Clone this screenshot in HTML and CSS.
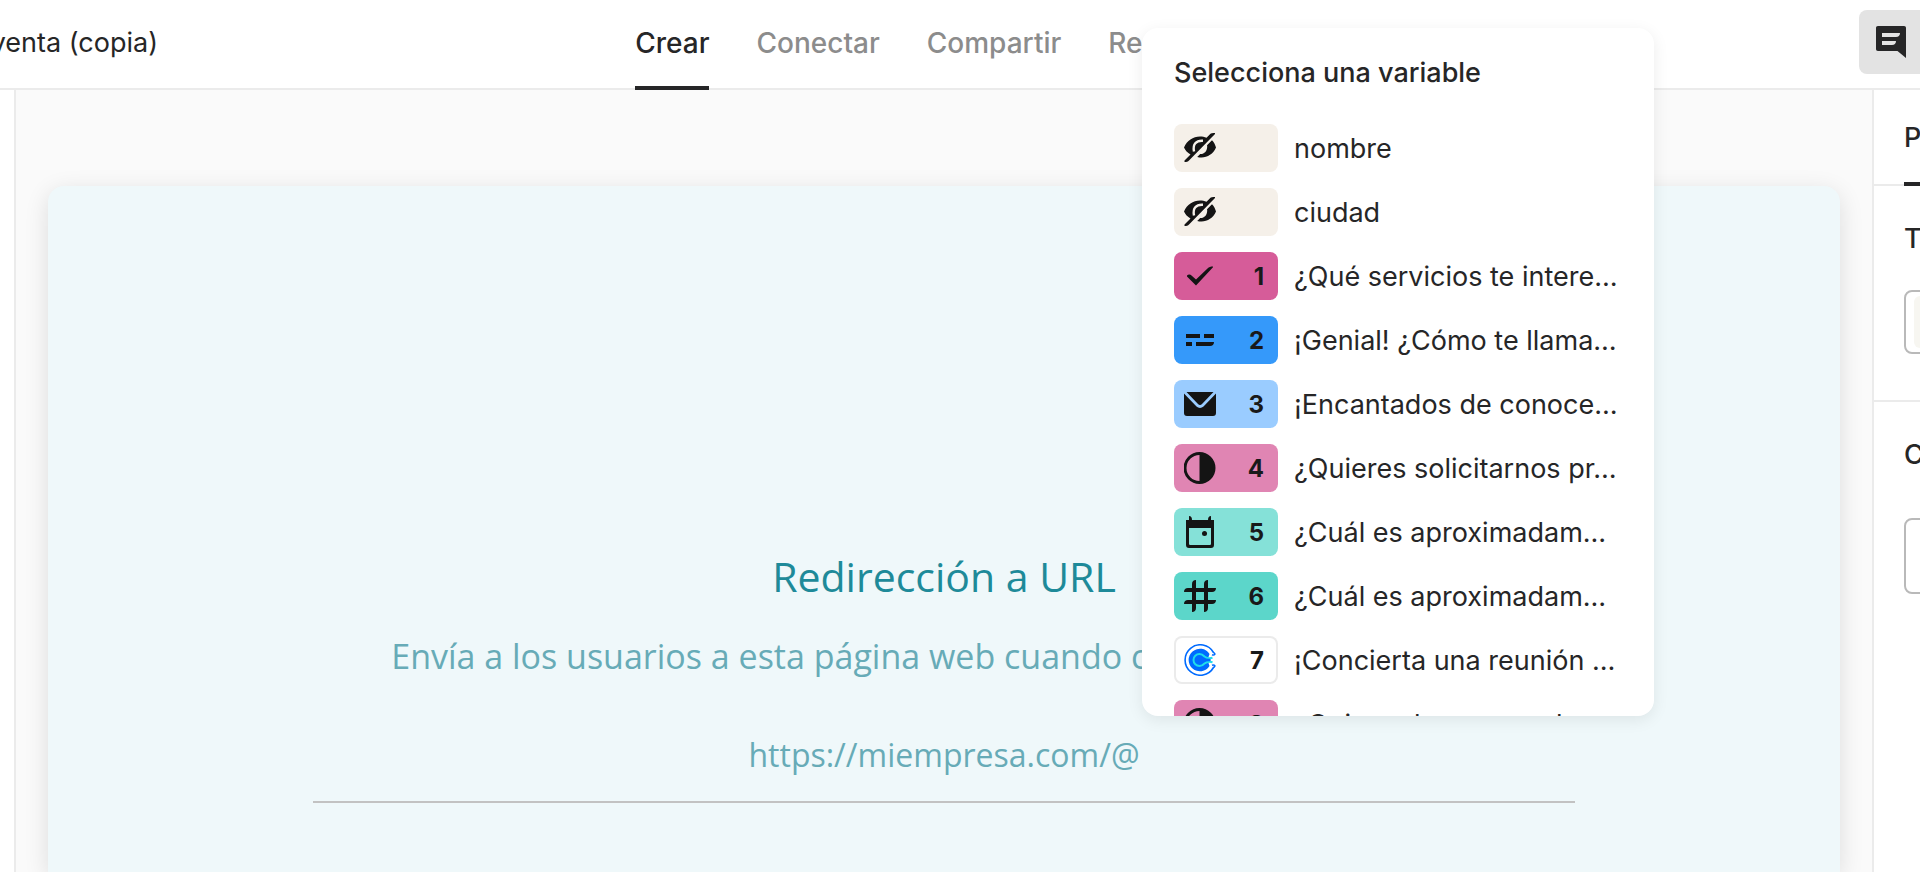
FILE: index.html
```html
<!DOCTYPE html>
<html lang="es">
<head>
<meta charset="utf-8">
<meta name="viewport" content="width=device-width, initial-scale=1">
<title>Editor de formularios</title>
<link rel="stylesheet" href="styles.css">
</head>
<body>
<svg class="sprite" aria-hidden="true">
  <symbol id="hidden" viewBox="0 0 32 32">
    <path d="M0 15.500C3 8.500 9 4.500 16 4.500c2.300 0 4.500.5 6.500 1.300L26 2.200C27 1.200 28.500 1 31 1v1L5 28.500c-1 1-2.500 1.500-4.500 1.500v-1.500l6-6C3.500 20.800 1.200 18.500 0 15.500Z"/>
    <path d="M10 19.500C8.500 12.500 12 8.300 19 8.800" fill="none" stroke="var(--badge)" stroke-width="2.400"/>
    <path d="M28 8.200c2 2 3.200 4.300 4 7.300C29.500 21.800 23.500 25.500 17.500 25.500c-1.500 0-3-.2-4.300-.6l3-2.800c3.600 0 7-2.500 7-7.600l-.2-1.300Z"/>
  </symbol>
  <symbol id="check" viewBox="0 0 32 32">
    <path d="M3 15.500c1.500-1.500 3.500-1 4.500 0l4.500 4L23.500 8.500c1.500-1.500 3-2 5.500-2v.8L12 25.500 3 16.500Z"/>
  </symbol>
  <symbol id="short" viewBox="0 0 32 32">
    <path d="M2 10h14v4H2zM20 10h10v4H20zM2 18h6v4H2zM12 18h18c0 2.500-1.500 4-4 4H12Z"/>
  </symbol>
  <symbol id="mail" viewBox="0 0 32 32">
    <path d="M2.500 4h27L18 16c-1.200 1.200-2.800 1.200-4 0ZM0 5.500l12.500 13c2 1.900 5 1.900 7 0L32 5.500V25c0 2-1 3-3 3H3c-2 0-3-1-3-3Z"/>
  </symbol>
  <symbol id="half" viewBox="0 0 32 32">
    <path d="M15.500 0a16 16 0 1 0 0 32a16 16 0 1 0 0-32Zm0 3v26A13 13 0 0 1 15.500 3Z"/>
  </symbol>
  <symbol id="calendar" viewBox="0 0 32 32">
    <path fill-rule="evenodd" d="M5 0c2 0 3 1.500 3 4h16c0-2.500 1-4 3-4v4h3v25c0 2-1 3-3 3H5c-2 0-3-1-3-3V4h3ZM5 12v15.500c0 1 .5 1.500 1.500 1.500h19c1 0 1.500-.5 1.500-1.500V12Z"/>
    <circle cx="20.500" cy="17.500" r="2.500"/>
  </symbol>
  <symbol id="hash" viewBox="0 0 32 32">
    <path fill-rule="evenodd" d="M8 4c0-2.500 1.500-4 4-4v8h8V4c0-2.500 1.500-4 4-4v8h8c0 2.500-1.500 4-4 4h-4v8h8c0 2.500-1.500 4-4 4h-4v4c0 2.500-1.500 4-4 4v-8h-8v4c0 2.500-1.500 4-4 4v-8H0c0-2.500 1.500-4 4-4h4v-8H0c0-2.500 1.500-4 4-4h4Zm4 8v8h8v-8Z"/>
  </symbol>
  <symbol id="calendly" viewBox="0 0 32 32">
    <path d="M25.500 10a11.300 11.300 0 1 0 0 12l-1.500-4.500 3-1.500-3-1.500Z" fill="#006bff"/>
    <path d="M28.500 13.800c-3 .9-6 .2-8-1.300-1.500-1.600-2.800-2.500-5-2.500a6 6 0 0 0 0 12c2.200 0 3.500-.9 5-2.500 2-1.500 5-2.200 8-1.300" fill="none" stroke="#1fdcea" stroke-width="2"/>
    <path d="M20 16c1.500-1.300 4-1.500 6.500-1v2c-2.500.5-5 .3-6.500-1Z" fill="#006bff"/>
    <path d="M29.500 8.500a15.200 15.200 0 1 0 0 15c.9-.3 1.500-1.200 1.200-2-.7-.8-1.700-.6-2.700-.2M29.500 8.500c.9.300 1.500 1.200 1.200 2-.7.800-1.700.6-2.700.2" fill="none" stroke="#006bff" stroke-width="1.600"/>
  </symbol>
</svg>

<div class="app">
  <header class="topbar">
    <h1 class="form-name">Formulario de venta (copia)</h1>
    <nav class="tabs">
      <a class="tab tab-active" href="#crear">Crear</a>
      <a class="tab" href="#conectar">Conectar</a>
      <a class="tab" href="#compartir">Compartir</a>
      <a class="tab" href="#resultados">Resultados</a>
    </nav>
    <div class="tools">
      <button class="comments" type="button" aria-label="Comentarios">
        <svg viewBox="0 0 32 32"><path fill-rule="evenodd" d="M2 0h26c1.300 0 2 .7 2 2v30l-8.500-7H2c-1.300 0-2-.7-2-2V2C0 .7.700 0 2 0Zm4 7v4h14c2.500 0 4-1.500 4-4Zm0 8v4h10c2.500 0 4-1.500 4-4Z"/></svg>
      </button>
    </div>
  </header>

  <div class="workspace">
    <aside class="left-panel"></aside>
    <main class="stage">
      <section class="card">
        <h2 class="card-title">Redirección a URL</h2>
        <p class="card-text">Envía a los usuarios a esta página web cuando completen tu typeform</p>
        <input class="url" type="text" aria-label="URL" value="https://miempresa.com/@">
      </section>
    </main>
    <aside class="right-panel">
      <div class="panel-tabs"><a class="panel-tab" href="#pregunta">Pregunta</a></div>
      <section class="panel-section">
        <h3 class="panel-title">Tipo</h3>
        <button class="type-select" type="button" aria-label="Tipo de pantalla"><span class="type-icon"></span></button>
      </section>
      <section class="panel-section">
        <h3 class="panel-title">Configuración</h3>
        <button class="setting" type="button" aria-label="Configuración"></button>
      </section>
    </aside>
  </div>

  <div class="picker" role="dialog" aria-labelledby="picker-title">
    <h2 class="picker-title" id="picker-title">Selecciona una variable</h2>
    <div class="options">
      <button class="option" type="button"><span class="badge sand"><svg><use href="#hidden"/></svg></span><span class="label">nombre</span></button>
      <button class="option" type="button"><span class="badge sand"><svg><use href="#hidden"/></svg></span><span class="label">ciudad</span></button>
      <button class="option" type="button"><span class="badge magenta"><svg><use href="#check"/></svg><b>1</b></span><span class="label">¿Qué servicios te intere…</span></button>
      <button class="option" type="button"><span class="badge blue"><svg><use href="#short"/></svg><b>2</b></span><span class="label">¡Genial! ¿Cómo te llama…</span></button>
      <button class="option" type="button"><span class="badge sky"><svg><use href="#mail"/></svg><b>3</b></span><span class="label">¡Encantados de conoce…</span></button>
      <button class="option" type="button"><span class="badge pink"><svg><use href="#half"/></svg><b>4</b></span><span class="label">¿Quieres solicitarnos pr…</span></button>
      <button class="option" type="button"><span class="badge mint"><svg><use href="#calendar"/></svg><b>5</b></span><span class="label">¿Cuál es aproximadam…</span></button>
      <button class="option" type="button"><span class="badge teal"><svg><use href="#hash"/></svg><b>6</b></span><span class="label">¿Cuál es aproximadam…</span></button>
      <button class="option" type="button"><span class="badge white"><svg><use href="#calendly"/></svg><b>7</b></span><span class="label">¡Concierta una reunión …</span></button>
      <button class="option" type="button"><span class="badge pink"><svg><use href="#half"/></svg><b>8</b></span><span class="label">¿Quieres hacernos algu…</span></button>
    </div>
  </div>
</div>
</body>
</html>
```
FILE: styles.css
```css
* { box-sizing: border-box; }

body {
  margin: 0;
  overflow: hidden;
  background: #fafafa;
  color: #262627;
  font: 400 27px/40px Inter, "Liberation Sans", sans-serif;
}

h1, h2, h3, p { margin: 0; font: inherit; }
button { margin: 0; padding: 0; border: 0; background: none; color: inherit; font: inherit; text-align: left; }
a { color: inherit; text-decoration: none; }
.sprite { display: none; }

.app { position: relative; display: flex; flex-direction: column; height: 100vh; }

.topbar {
  display: grid;
  grid-template-columns: 1fr auto 1fr;
  height: 90px;
  flex: none;
  background: #fff;
  border-bottom: 2px solid #ebebeb;
}
.form-name { display: flex; justify-content: flex-end; align-items: center; width: 158px; overflow: hidden; white-space: nowrap; padding-bottom: 2px; }
.tabs { display: flex; gap: 47px; margin-bottom: -2px; padding-right: 28px; font-size: 28px; }
.tab { display: flex; align-items: center; border-bottom: 4px solid transparent; color: #8c8c8c; font-weight: 500; }
.tab-active { color: #262627; border-color: #262627; }
.tools { justify-self: end; width: 61px; padding-top: 10px; overflow: hidden; }
.comments { display: flex; align-items: center; width: 80px; height: 64px; padding-left: 17px; border-radius: 8px; background: #e3e3e3; }
.comments svg { width: 32px; height: 32px; fill: #262627; }

.workspace { display: flex; flex: 1; min-height: 0; }
.left-panel { width: 16px; flex: none; background: #fff; border-right: 2px solid #ebebeb; }
.stage { display: flex; flex: 1; padding: 96px 32px 0; min-width: 0; overflow: hidden; }
.card {
  display: flex;
  flex: 1;
  flex-direction: column;
  align-items: center;
  padding: 362px 32px 0;
  border-radius: 16px 16px 0 0;
  background: #eff8fa;
  box-shadow: 0 6px 24px rgba(0, 0, 0, .12);
  color: #67abb7;
  font: 400 32px/48px "Open Sans", "Noto Sans", sans-serif;
}
.card-title { color: #1e8a99; font-size: 41px; line-height: 56px; }
.card-text { margin-top: 28px; font-size: 34px; white-space: nowrap; }
.url {
  width: 73%;
  height: 73px;
  margin-top: 50px;
  padding: 0 0 22px;
  border: 0;
  border-bottom: 2px solid #c2c2c2;
  background: none;
  color: inherit;
  font: inherit;
  text-align: center;
  outline: 0;
}

.right-panel { width: 48px; flex: none; overflow: hidden; background: #fff; border-left: 2px solid #ebebeb; font-weight: 500; }
.panel-tabs { display: flex; height: 96px; padding-left: 30px; border-bottom: 2px solid #ebebeb; }
.panel-tab { display: flex; align-items: center; margin-bottom: -2px; padding-top: 4px; border-bottom: 4px solid #262627; }
.panel-section { display: flex; flex-direction: column; padding: 33px 0 46px 30px; border-bottom: 2px solid #ebebeb; }
.panel-section:last-child { border: 0; }
.type-select, .setting { display: flex; width: 240px; border: 2px solid #b9b9b9; border-radius: 8px; }
.type-select { height: 64px; margin-top: 31px; padding: 4px 8px; }
.type-icon { width: 104px; border-radius: 6px; background: #f7f6f1; }
.setting { height: 76px; margin-top: 43px; }

.picker {
  position: absolute;
  top: 28px;
  left: 1142px;
  width: 512px;
  height: 688px;
  padding: 25px 32px 0;
  overflow: hidden;
  border-radius: 16px;
  background: #fff;
  box-shadow: 0 4px 16px rgba(0, 0, 0, .08);
}
.picker-title { font-weight: 500; }
.options { display: flex; flex-direction: column; gap: 16px; padding-top: 31px; }
.option { display: flex; align-items: center; gap: 16px; height: 48px; white-space: nowrap; }
.label, .badge b { padding-top: 2px; }
.badge {
  display: flex;
  flex: none;
  align-items: center;
  justify-content: space-between;
  width: 104px;
  height: 48px;
  padding: 0 14px 0 10px;
  border-radius: 8px;
  background: var(--badge);
  color: #191919;
}
.badge svg { width: 32px; height: 32px; fill: #141414; }
.badge b { font-size: 24px; font-weight: 700; }
.sand { --badge: #f5f0e9; }
.magenta { --badge: #d65c99; }
.blue { --badge: #3599fa; }
.sky { --badge: #9accff; }
.pink { --badge: #e085b3; }
.mint { --badge: #85e1d8; }
.teal { --badge: #5cd6ca; }
.white { --badge: #fff; box-shadow: inset 0 0 0 2px #ebebeb; }
```
